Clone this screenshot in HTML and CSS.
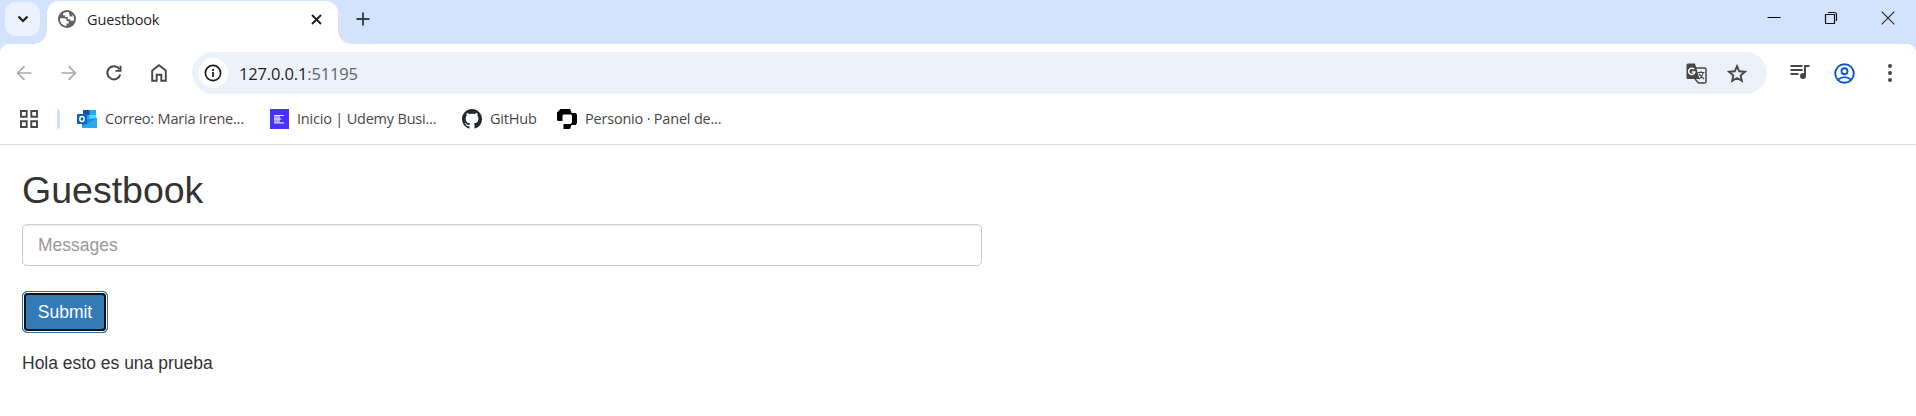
FILE: index.html
```html
<!DOCTYPE html>
<html lang="es">
<head>
<meta charset="utf-8">
<title>Guestbook</title>
<link rel="stylesheet" href="styles.css">
</head>
<body>
<header class="tabstrip">
  <div class="tab-search"><svg width="12" height="8" viewBox="0 0 12 8"><path d="M1.500 1.500 6 6l4.500-4.500" fill="none" stroke="#1f1f1f" stroke-width="2.200"/></svg></div>
  <div class="tab">
    <svg class="globe" width="18" height="18" viewBox="0 0 18 18"><circle cx="9" cy="9" r="9" fill="#5f6368"/><path d="M2 8.300H6.300Q8.700 8.300 8.700 10.300V11.200H10.700V13.500H8.500V15.900C4.500 15.800 1.700 12.700 2 8.300ZM11 2.300C8.500 1.700 6.300 2.600 4.900 3.900V5.200H7V7H9.700V9.200H12.300V10.800H15.700C16.500 8.200 15.800 6 14.400 4.600V6.500H11.700V4.400H11Z" fill="#fff"/></svg>
    <span class="tab-title">Guestbook</span>
    <svg class="tab-close" width="11" height="11" viewBox="0 0 11 11"><path d="m1 1 9 9M10 1 1 10" stroke="#1f1f1f" stroke-width="1.900"/></svg>
  </div>
  <svg class="new-tab" width="14" height="14" viewBox="0 0 14 14"><path d="M7 .5v13M.5 7h13" stroke="#3c4043" stroke-width="1.900"/></svg>
  <div class="window-controls">
    <svg width="14" height="14" viewBox="0 0 14 14"><path d="M.5 6.500h13" stroke="#000"/></svg>
    <svg width="14" height="14" viewBox="0 0 14 14"><path d="M1.500 3.500h9v9h-9zM4 1.500h6.500q2 0 2 2V10" fill="none" stroke="#111" stroke-width="1.200"/></svg>
    <svg width="14" height="14" viewBox="0 0 14 14"><path d="m.7.700 12.600 12.600M13.300.7.700 13.300" stroke="#222" stroke-width="1.100"/></svg>
  </div>
</header>
<nav class="toolbar">
  <div class="nav-icons">
    <svg width="16" height="16" viewBox="0 0 16 16"><path d="M15.500 8H2M8.500 1.200 1.700 8l6.800 6.800" fill="none" stroke="#a9a9a9" stroke-width="1.700"/></svg>
    <svg width="16" height="16" viewBox="0 0 16 16"><path d="M.5 8H14M7.500 1.200 14.300 8l-6.800 6.800" fill="none" stroke="#a9a9a9" stroke-width="1.700"/></svg>
    <svg width="16" height="16" viewBox="0 0 16 16"><path d="M14.300 9.500A6.600 6.600 0 1 1 13.500 4.200" fill="none" stroke="#474747" stroke-width="2"/><path d="M15.500.7v6.100H9.500V5h4V.7z" fill="#474747"/></svg>
    <svg width="16" height="18" viewBox="0 0 16 18"><path d="M1.200 6.500 8 1.300l6.800 5.200v10.300h-4.500v-6H5.700v6H1.200z" fill="none" stroke="#474747" stroke-width="1.900"/></svg>
  </div>
  <div class="omnibox">
    <div class="site-info"><svg width="18" height="18" viewBox="0 0 18 18"><circle cx="9" cy="9" r="7.600" fill="none" stroke="#1f1f1f" stroke-width="1.700"/><path d="M9 8v5M9 5v1.900" stroke="#1f1f1f" stroke-width="1.800"/></svg></div>
    <span class="url">127.0.0.1<span class="port">:51195</span></span>
    <svg class="translate" width="21" height="21" viewBox="0 0 21 21"><path d="M9 5h9.500q1.500 0 1.500 1.500v12q0 1.500-1.500 1.500h-6L9 16" fill="none" stroke="#474747" stroke-width="1.500"/><path d="M2 .5h7L13.500 16H2Q.5 16 .5 14.500V2Q.5.500 2 .5Z" fill="#474747"/><path d="M8 6.300A3.100 3.100 0 1 0 8.800 9H5.800" fill="none" stroke="#fff" stroke-width="1.500"/><path d="M11.500 9.500h7M15 8v1.500M17.300 9.500c-.5 2.500-2 5-4 6.500M13 11l5 5" fill="none" stroke="#474747" stroke-width="1.200"/></svg>
    <svg class="star" width="20" height="19" viewBox="0 0 20 19"><path d="m10 2.200 2.200 5.100 5.600.5-4.200 3.700 1.200 5.400-4.800-2.900-4.800 2.900 1.200-5.400-4.200-3.700 5.600-.5z" fill="none" stroke="#474747" stroke-width="1.900"/></svg>
  </div>
  <svg class="media" width="20" height="16" viewBox="0 0 20 16"><path d="M.5 2h12M.5 6h12M.5 10h8" stroke="#474747" stroke-width="1.900"/><circle cx="13" cy="12" r="3" fill="#474747"/><path d="M15 12V2h4.500" fill="none" stroke="#474747" stroke-width="2"/></svg>
  <svg class="profile" width="21" height="21" viewBox="0 0 21 21"><g fill="none" stroke="#0b57d0" stroke-width="1.900"><circle cx="10.500" cy="10.500" r="9.300"/><circle cx="10.500" cy="8.200" r="3"/><path d="M4 16.500q6.500-4.800 13 0"/></g></svg>
  <svg class="menu" width="4" height="18" viewBox="0 0 4 18"><g fill="#474747"><circle cx="2" cy="2" r="2"/><circle cx="2" cy="9" r="2"/><circle cx="2" cy="16" r="2"/></g></svg>
</nav>
<nav class="bookmarks">
  <svg class="apps" width="18" height="18" viewBox="0 0 18 18"><path d="M1 1h5.700v5.700H1zM11.300 1H17v5.700h-5.700zM1 11.300h5.700V17H1zM11.300 11.300H17V17h-5.700z" fill="none" stroke="#474747" stroke-width="1.900"/></svg>
  <span class="divider"></span>
  <a class="bookmark outlook"><svg width="20" height="18" viewBox="0 0 20 18"><path d="M6 0h13v10H6z" fill="#28a8ea"/><path d="M6 0h6.500v5H6z" fill="#0358a7"/><path d="M12.500 5H19v5h-6.500z" fill="#50d9ff"/><path d="M5 9h7l8-1v9q0 1-1 1H6q-1 0-1-1z" fill="#1490df"/><path d="m5 17 15-9v9q0 1-1 1H6z" fill="#28a8ea"/><rect y="4" width="10" height="10" rx="1" fill="#0a64c0"/><ellipse cx="5" cy="9" rx="2.200" ry="2.500" fill="none" stroke="#fff" stroke-width="1.400"/></svg><span>Correo: Maria Irene...</span></a>
  <a class="bookmark udemy"><svg width="19" height="20" viewBox="0 0 19 20"><path d="M0 0h19v20H0z" fill="#4733ff"/><path d="M4 7h6v6H4z" fill="#a99fff"/><path d="M4 6.500h10M4 10h7.500M4 13.800h10" stroke="#e4e1ff" stroke-width="1.200"/></svg><span>Inicio | Udemy Busi...</span></a>
  <a class="bookmark github"><svg width="20" height="20" viewBox="0 0 16 16"><path fill="#24292f" d="M8 0C3.580 0 0 3.580 0 8c0 3.540 2.290 6.530 5.470 7.590.4.070.55-.17.55-.38 0-.19-.01-.82-.01-1.490-2.010.37-2.530-.49-2.690-.94-.09-.23-.48-.94-.82-1.130-.28-.15-.68-.52-.01-.53.63-.01 1.080.58 1.230.82.72 1.210 1.870.87 2.330.66.070-.52.280-.87.510-1.070-1.780-.2-3.640-.89-3.640-3.950 0-.87.310-1.590.82-2.150-.08-.2-.36-1.020.08-2.120 0 0 .67-.21 2.200.82.640-.18 1.320-.27 2-.27s1.360.09 2 .27c1.530-1.040 2.200-.82 2.200-.82.44 1.100.16 1.920.08 2.120.51.560.82 1.270.82 2.150 0 3.070-1.870 3.750-3.650 3.950.29.250.54.730.54 1.480 0 1.070-.01 1.930-.01 2.200 0 .21.150.46.550.38A8.010 8.010 0 0 0 16 8c0-4.420-3.580-8-8-8Z"/></svg><span>GitHub</span></a>
  <a class="bookmark personio"><svg width="20" height="20" viewBox="0 0 20 20"><path d="M3.500 0H12Q14 0 14.500 4H18.500L20 5.500V14L18.500 16H14.500L13 20H6.500V15H13.500L15 13.500V6.500L14 5.500H6.500L5.500 6.500V12H1L0 11V3.500Z" fill="#000"/></svg><span>Personio · Panel de...</span></a>
</nav>
<main class="page">
  <h1 class="heading">Guestbook</h1>
  <form class="entry-form">
    <input class="message" type="text" placeholder="Messages">
    <button class="submit" type="button">Submit</button>
  </form>
  <p class="entry">Hola esto es una prueba</p>
</main>
</body>
</html>
```
FILE: styles.css
```css
* { box-sizing: border-box; }
body { margin: 0; height: 416px; overflow: hidden; background: #fff; font-family: "Open Sans", sans-serif; }
svg { display: block; flex: none; }
.tabstrip { display: flex; height: 44px; background: #d3e3fd; position: relative; }
.tabstrip::after { content: ""; position: absolute; left: 0; right: 0; top: 44px; height: 8px; background: radial-gradient(circle at 8px 8px, transparent 7.500px, #d3e3fd 8px) left / 8px 8px no-repeat, radial-gradient(circle at 0 8px, transparent 7.500px, #d3e3fd 8px) right / 8px 8px no-repeat; }
.tab-search { width: 35px; height: 34px; margin: 2px 0 0 5px; border-radius: 11px; background: #ebf1fd; display: grid; place-items: center; }
.tab { position: relative; display: flex; align-items: center; width: 291px; height: 43px; margin: 1px 0 0 7px; padding: 0 16px 7px 11px; background: #fff; border-radius: 12px 12px 0 0; }
.tab::before, .tab::after { content: ""; position: absolute; bottom: 0; width: 13px; height: 13px; }
.tab::before { left: -13px; background: radial-gradient(circle at 0 0, transparent 12.500px, #fff 13px); }
.tab::after { right: -13px; background: radial-gradient(circle at 100% 0, transparent 12.500px, #fff 13px); }
.tab-title { margin-left: 11px; font-size: 14.500px; letter-spacing: -.15px; color: #1f1f1f; }
.tab-close { margin-left: auto; }
.new-tab { margin: 12px 0 0 18px; }
.window-controls { display: flex; gap: 43px; margin: 11px 21px 0 auto; }
.toolbar { display: flex; align-items: center; height: 58px; padding: 0 24px 0 17px; }
.nav-icons { display: flex; align-items: center; gap: 29px; width: 175px; margin: 0 1px 0 -1px; }
.omnibox { display: flex; align-items: center; width: 1575px; height: 42px; padding: 0 20px 0 6px; border-radius: 21px; background: #ecf1fa; }
.site-info { width: 30px; height: 30px; border-radius: 50%; background: #fff; display: grid; place-items: center; }
.url { margin-left: 11px; font-size: 16.500px; letter-spacing: -.15px; color: #1f1f1f; }
.port { color: #5f6368; }
.translate { margin-left: auto; }
.star { margin-left: 20px; }
.media { margin: -2px 0 0 23px; }
.profile { margin-left: 24px; }
.menu { margin-left: auto; }
.bookmarks { display: flex; align-items: center; height: 43px; padding: 0 0 9px 20px; border-bottom: 1px solid #dcdcdc; }
.divider { width: 3px; height: 20px; margin: 0 17px 0 19px; border-radius: 2px; background: #d3e3fd; }
.bookmark { display: flex; align-items: center; gap: 8px; font-size: 14.500px; letter-spacing: -.2px; color: #474747; white-space: nowrap; }
.outlook { width: 193px; }
.udemy { width: 192px; }
.github { width: 95px; }
.page { padding: 25px 22px; font-family: "Liberation Sans", Arial, sans-serif; color: #333; }
.heading { margin: 0 0 13px; font-size: 37.500px; font-weight: 400; line-height: 41px; }
.entry-form { display: flex; flex-direction: column; align-items: flex-start; gap: 25px; }
.message { width: 960px; height: 42px; padding: 0 15px; border: 1px solid #ccc; border-radius: 5px; box-shadow: inset 0 1px 1px rgba(0,0,0,.075); font: 17.500px "Liberation Sans", Arial, sans-serif; }
.message::placeholder { color: #999; opacity: 1; }
.submit { position: relative; width: 86px; height: 42px; padding: 0; border: 1px solid #2e6da4; border-radius: 5px; background: #337ab7; color: #fff; font: 17.500px "Liberation Sans", Arial, sans-serif; }
.submit::after { content: ""; position: absolute; inset: 1px; border: 2px solid #101010; border-radius: 4px; box-shadow: 0 0 0 1px #fff; }
.entry { margin: 18px 0 0; font-size: 17.500px; line-height: 25px; }
```
